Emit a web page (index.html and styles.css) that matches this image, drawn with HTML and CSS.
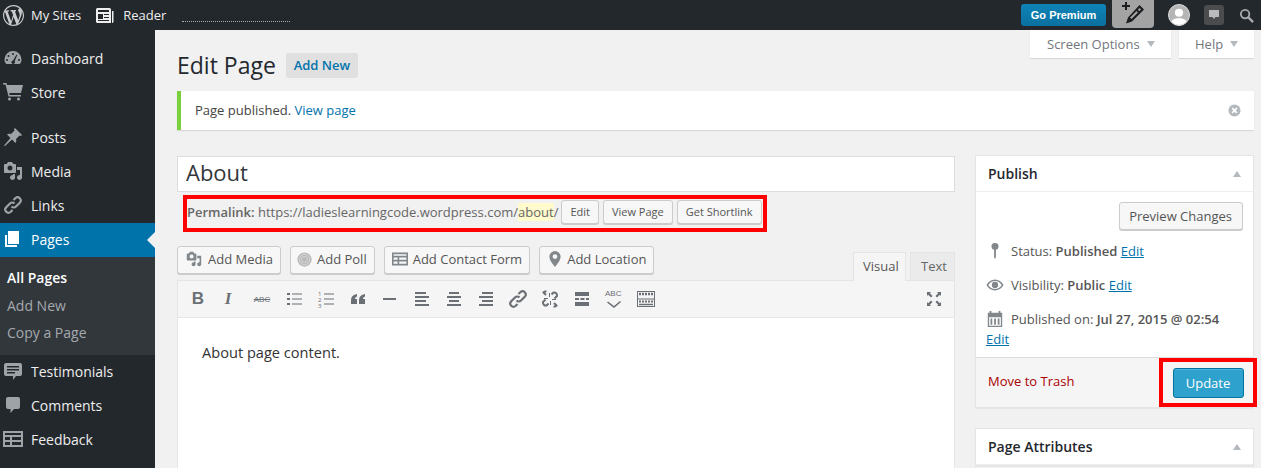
FILE: index.html
```html
<!DOCTYPE html>
<html lang="en">
<head>
    <meta charset="UTF-8">
    <title>Edit Page</title>
    <link rel="stylesheet" href="styles.css">
</head>
<body>
    <header class="topbar">
        <a class="top-link">
            <svg class="wp-logo" viewBox="0 0 20 20"><path d="M20 10c0-5.510-4.490-10-10-10C4.480 0 0 4.490 0 10c0 5.520 4.480 10 10 10 5.510 0 10-4.480 10-10zM7.780 15.370L4.370 6.220c.55-.02 1.170-.08 1.170-.08.5-.06.44-1.130-.06-1.110 0 0-1.450.11-2.370.11-.18 0-.37 0-.58-.01C4.120 2.690 6.870 1.110 10 1.110c2.330 0 4.450.87 6.050 2.340-.68-.11-1.650.39-1.650 1.580 0 .74.45 1.360.9 2.100.35.61.55 1.360.55 2.460 0 1.490-1.400 5-1.400 5l-3.030-8.370c.54-.02.82-.17.82-.17.5-.05.44-1.250-.06-1.220 0 0-1.440.12-2.380.12-.87 0-2.330-.12-2.330-.12-.5-.03-.56 1.200-.06 1.220l.92.08 1.260 3.410zM17.410 10c.24-.64.74-1.870.43-4.250.7 1.290 1.050 2.710 1.050 4.250 0 3.290-1.730 6.240-4.400 7.780.97-2.590 1.940-5.200 2.920-7.780zM6.100 18.090C3.120 16.650 1.110 13.530 1.110 10c0-1.300.23-2.480.72-3.590C3.250 10.300 4.670 14.200 6.100 18.090zm4.030-6.630l2.580 6.980c-.86.29-1.760.45-2.710.45-.79 0-1.570-.11-2.290-.33.81-2.380 1.620-4.740 2.420-7.100z"/></svg>
            My Sites
        </a>
        <a class="top-link reader">
            <svg class="reader-icon" viewBox="0 0 18 15"><path fill-rule="evenodd" d="M0 1.500A1.500 1.500 0 0 1 1.500 0h12A1.500 1.500 0 0 1 15 1.500V15H1.500A1.500 1.500 0 0 1 0 13.500zM2 2v2h11V2zM2 6v5h5V6zm6 0v1h5V6zm0 3v1h5V9zM2 12v1h11v-1zM16 3h1.500v10.500A1.500 1.500 0 0 1 16 15z"/></svg>
            Reader
        </a>
        <div class="top-dots"></div>
        <div class="top-right">
            <a class="go-premium">Go Premium</a>
            <a class="new-post">
                <svg viewBox="0 0 24 24" width="24" height="24"><path d="M4 0h2v3h3v2H6v3H4V5H1V3h3z" fill="#1b1e21"/><path fill-rule="evenodd" d="M18.500 3L23 7.500 11 19.500 5 21.500l2-6zM18.500 6L16.800 7.700l1.500 1.500L20 7.500zM15.500 9L9 15.500l1.500 1.500L17 10.500z" fill="#1b1e21"/></svg>
            </a>
            <span class="avatar">
                <svg viewBox="0 0 22 22"><circle cx="11" cy="8.500" r="4.500"/><path d="M2 22c0-6 4-7.500 9-7.500s9 1.500 9 7.500z"/></svg>
            </span>
            <span class="notes">
                <svg viewBox="0 0 12 12" width="12" height="12"><path d="M1 1h10v7H7.500L6 10 4.500 8H1z" fill="#b9bbbc"/></svg>
            </span>
            <svg class="search" viewBox="0 0 16 16"><circle cx="6.500" cy="6.500" r="4.500" fill="none" stroke="#a8aaac" stroke-width="2"/><path d="M10 10l5 5" stroke="#a8aaac" stroke-width="2.500"/></svg>
        </div>
    </header>

    <div class="layout">
        <nav class="sidebar">
            <a class="menu-item">
                <svg class="menu-icon" viewBox="0 0 20 20"><path fill-rule="evenodd" d="M10 3a8.500 8.500 0 0 0-8.500 8.500c0 2 .7 3.500 2 4.500h13c1.300-1 2-2.500 2-4.500A8.500 8.500 0 0 0 10 3zM10 5a1 1 0 1 1 0 2 1 1 0 0 1 0-2zM5.500 7a1 1 0 1 1 0 2 1 1 0 0 1 0-2zM4 11a1 1 0 1 1 0 2 1 1 0 0 1 0-2zM16 11a1 1 0 1 1 0 2 1 1 0 0 1 0-2zM13.500 6.500l.8.400-2.600 6.300a1.800 1.800 0 1 1-1.600-.8z"/></svg>
                Dashboard
            </a>
            <a class="menu-item">
                <svg class="menu-icon" viewBox="0 0 20 20"><path d="M0 1h3.500l.6 2H20l-2 8H6.200l.5 2H18v1.500H5.500L2.500 2.500H0zM6.500 15.500a1.500 1.500 0 1 1 0 3 1.500 1.500 0 0 1 0-3zM15.500 15.500a1.500 1.500 0 1 1 0 3 1.500 1.500 0 0 1 0-3z"/></svg>
                Store
            </a>
            <div class="menu-gap"></div>
            <a class="menu-item">
                <svg class="menu-icon" viewBox="0 0 20 20"><path d="M12 1l7 7-1 1-1.500-.5L13 12c.5 2 .3 3-.5 4L9 12.500 2 19l-1-.5L7.500 11 4 7.500c1-.8 2-1 4-.5l3.500-3.500L11 2z"/></svg>
                Posts
            </a>
            <a class="menu-item">
                <svg class="menu-icon" viewBox="0 0 20 20"><path fill-rule="evenodd" d="M13 11V4c0-.55-.45-1-1-1h-1.670L9 1H5L3.670 3H2c-.55 0-1 .45-1 1v7c0 .55.45 1 1 1h10c.55 0 1-.45 1-1zM7 4.500c1.380 0 2.500 1.120 2.500 2.500S8.380 9.500 7 9.500 4.500 8.380 4.500 7 5.620 4.500 7 4.500zM14 6h5v10.500c0 1.380-1.120 2.500-2.500 2.500S14 17.880 14 16.500s1.120-2.500 2.500-2.500c.17 0 .34.020.5.050V9h-3V6zm-4 8.050V13h2v3.500c0 1.380-1.120 2.500-2.500 2.500S7 17.880 7 16.500 8.120 14 9.500 14c.17 0 .34.020.5.050z"/></svg>
                Media
            </a>
            <a class="menu-item">
                <svg class="menu-icon" viewBox="0 0 20 20"><g fill="none" stroke="#9ea3a8" stroke-width="2.200"><path d="M8.500 11.500a3.200 3.200 0 0 0 4.500 0l4-4a3.200 3.200 0 0 0-4.500-4.500l-2 2"/><path d="M11.500 8.500a3.200 3.200 0 0 0-4.500 0l-4 4a3.200 3.200 0 0 0 4.500 4.500l2-2"/></g></svg>
                Links
            </a>
            <a class="menu-item menu-current">
                <svg class="menu-icon" viewBox="0 0 20 20"><path d="M5 2h11v13H5z"/><path d="M2 6h2v10h10v2H2z"/></svg>
                Pages
            </a>
            <div class="submenu">
                <a class="submenu-item submenu-current">All Pages</a>
                <a class="submenu-item">Add New</a>
                <a class="submenu-item">Copy a Page</a>
            </div>
            <a class="menu-item">
                <svg class="menu-icon" viewBox="0 0 20 20"><path fill-rule="evenodd" d="M3 2h14a2 2 0 0 1 2 2v9a2 2 0 0 1-2 2h-4l-3 4v-4H3a2 2 0 0 1-2-2V4a2 2 0 0 1 2-2zM4 5v1.500h12V5zM4 8v1.500h12V8zM4 11v1.500h8V11z"/></svg>
                Testimonials
            </a>
            <a class="menu-item">
                <svg class="menu-icon" viewBox="0 0 20 20"><path d="M5 2h10a2 2 0 0 1 2 2v8a2 2 0 0 1-2 2h-4l-3.500 4v-4H5a2 2 0 0 1-2-2V4a2 2 0 0 1 2-2z"/></svg>
                Comments
            </a>
            <a class="menu-item">
                <svg class="menu-icon" viewBox="0 0 20 20"><path fill-rule="evenodd" d="M0 2h20v16H0zM2 4v2h16V4zM2 8v3h5V8zM9 8v3h9V8zM2 13v3h5v-3zM9 13v3h9v-3z"/></svg>
                Feedback
            </a>
        </nav>

        <main class="content">
            <div class="screen-tabs">
                <a class="screen-tab tab-options">Screen Options <span class="caret"></span></a>
                <a class="screen-tab tab-help">Help <span class="caret"></span></a>
            </div>

            <div class="page-head">
                <h1>Edit Page</h1>
                <a class="add-new">Add New</a>
            </div>

            <div class="notice">
                <p>Page published. <a class="link-plain">View page</a></p>
                <svg class="notice-close" viewBox="0 0 14 14"><circle cx="7" cy="7" r="6.500" fill="#b4b9be"/><path d="M4.500 4.500l5 5M9.500 4.500l-5 5" stroke="#fff" stroke-width="1.800"/></svg>
            </div>

            <div class="columns">
                <div class="main-col">
                    <div class="title-input">About</div>

                    <div class="permalink">
                        <b>Permalink:</b>&nbsp;https://ladieslearningcode.wordpress.com/<span class="slug">about</span>/
                        <a class="btn-small">Edit</a>
                        <a class="btn-small">View Page</a>
                        <a class="btn-small">Get Shortlink</a>
                    </div>

                    <div class="media-row">
                        <div class="media-buttons">
                            <a class="btn">
                                <svg class="btn-icon icon-media" viewBox="0 0 20 20"><path fill-rule="evenodd" d="M13 11V4c0-.55-.45-1-1-1h-1.670L9 1H5L3.670 3H2c-.55 0-1 .45-1 1v7c0 .55.45 1 1 1h10c.55 0 1-.45 1-1zM7 4.500c1.380 0 2.500 1.120 2.500 2.500S8.380 9.500 7 9.500 4.500 8.380 4.500 7 5.620 4.500 7 4.500zM14 6h5v10.500c0 1.380-1.120 2.500-2.500 2.500S14 17.880 14 16.500s1.120-2.500 2.500-2.500c.17 0 .34.020.5.050V9h-3V6zm-4 8.050V13h2v3.500c0 1.380-1.120 2.500-2.500 2.500S7 17.880 7 16.500 8.120 14 9.500 14c.17 0 .34.020.5.050z"/></svg>
                                Add Media
                            </a>
                            <a class="btn">
                                <svg class="btn-icon icon-poll" viewBox="0 0 20 20"><circle cx="10" cy="10" r="9.500" fill="#b9b9b9"/><circle cx="10" cy="10" r="7" fill="none" stroke="#e2e2e2"/><circle cx="10" cy="10" r="4" fill="none" stroke="#e2e2e2"/></svg>
                                Add Poll
                            </a>
                            <a class="btn">
                                <svg class="btn-icon icon-form" viewBox="0 0 20 20"><path fill-rule="evenodd" d="M0 2h20v16H0zM2 4v2h16V4zM2 8v3h5V8zM9 8v3h9V8zM2 13v3h5v-3zM9 13v3h9v-3z"/></svg>
                                Add Contact Form
                            </a>
                            <a class="btn">
                                <svg class="btn-icon icon-pin" viewBox="0 0 14 20"><path fill-rule="evenodd" d="M7 0a7 7 0 0 1 7 7c0 4.500-4 9.500-7 13-3-3.500-7-8.500-7-13a7 7 0 0 1 7-7zM7 4a3 3 0 1 0 0 6 3 3 0 0 0 0-6z"/></svg>
                                Add Location
                            </a>
                        </div>
                        <div class="editor-tabs">
                            <a class="editor-tab editor-tab-on">Visual</a>
                            <a class="editor-tab">Text</a>
                        </div>
                    </div>

                    <div class="editor">
                        <div class="toolbar">
                            <span class="tool tool-b">B</span>
                            <span class="tool tool-i">I</span>
                            <span class="tool tool-abc">ABC</span>
                            <span class="tool"><svg viewBox="0 0 20 20"><path d="M3 4h3v2H3zM8 4.500h10V5.500H8zM3 9h3v2H3zM8 9.500h10v1H8zM3 14h3v2H3zM8 14.500h10v1H8z"/></svg></span>
                            <span class="tool tool-ol">
                                <svg viewBox="0 0 20 20"><path d="M8 4.500h10V5.500H8zM8 9.500h10v1H8zM8 14.500h10v1H8z"/></svg>
                                <span class="ol-nums">1<br>2<br>3</span>
                            </span>
                            <span class="tool"><svg viewBox="0 0 20 20"><path d="M9 5v2.500C7.500 8 7 9 7 10h2v5H3v-4c0-3.500 2-5.500 6-6zM17 5v2.500c-1.500.5-2 1.500-2 2.500h2v5h-6v-4c0-3.500 2-5.500 6-6z"/></svg></span>
                            <span class="tool"><svg viewBox="0 0 20 20"><path d="M3 9h13v2H3z"/></svg></span>
                            <span class="tool"><svg viewBox="0 0 20 20"><path d="M3 3h11v2H3zM3 7h14v2H3zM3 11h11v2H3zM3 15h14v2H3z"/></svg></span>
                            <span class="tool"><svg viewBox="0 0 20 20"><path d="M5 3h10v2H5zM3 7h14v2H3zM5 11h10v2H5zM3 15h14v2H3z"/></svg></span>
                            <span class="tool"><svg viewBox="0 0 20 20"><path d="M6 3h11v2H6zM3 7h14v2H3zM6 11h11v2H6zM3 15h14v2H3z"/></svg></span>
                            <span class="tool"><svg viewBox="0 0 20 20"><g fill="none" stroke="#6b7076" stroke-width="2.200"><path d="M8.500 11.500a3.200 3.200 0 0 0 4.500 0l4-4a3.200 3.200 0 0 0-4.500-4.500l-2 2"/><path d="M11.500 8.500a3.200 3.200 0 0 0-4.500 0l-4 4a3.200 3.200 0 0 0 4.500 4.500l2-2"/></g></svg></span>
                            <span class="tool"><svg viewBox="0 0 20 20"><g fill="none" stroke="#6b7076" stroke-width="2"><path d="M11.500 5.500l2-2a3 3 0 0 1 3.500 3.500l-2.500 2.500"/><path d="M8.500 14.500l-2 2A3 3 0 0 1 3 13l2.500-2.500"/><path d="M6 6L3.500 3.500A3 3 0 0 1 6.500 2.500M14 14l2.500 2.500a3 3 0 0 1-3 1"/></g><path d="M9 4h1v4H9zM10 12h1v4h-1zM4 9h4v1H4zM12 10h4v1h-4z"/></svg></span>
                            <span class="tool"><svg viewBox="0 0 20 20"><path d="M3 3h14v4H3zM3 9h4v2H3zM8.500 9h4v2h-4zM14 9h3v2h-3zM3 13h14v4H3z"/></svg></span>
                            <span class="tool tool-spell">
                                <span class="spell-text">ABC</span>
                                <svg class="spell-check" viewBox="0 0 16 10"><path d="M1 3.500l1-1L8 7l6-5 1 1L8 9z"/></svg>
                            </span>
                            <span class="tool"><svg viewBox="0 0 20 20"><path fill-rule="evenodd" d="M1 2h18v16H1zM2 3v6.500h16V3zM2 10.500V17h16v-6.500z"/><path d="M3 5h14" stroke="#6b7076" stroke-width="2.500" stroke-dasharray="2 1"/><path d="M3 12.500h14" stroke="#6b7076" stroke-width="2" stroke-dasharray="2 1"/><path d="M3 15.500h14" stroke="#6b7076" stroke-width="1.500"/></svg></span>
                            <span class="tool tool-full"><svg viewBox="0 0 20 20"><path d="M3 3h4L5.800 4.200 8.500 7 7 8.500 4.200 5.800 3 7zM17 3v4l-1.200-1.200L13 8.500 11.500 7l2.700-2.800L13 3zM3 17v-4l1.200 1.200L7 11.500 8.500 13l-2.700 2.800L7 17zM17 17h-4l1.200-1.200L11.500 13l1.500-1.500 2.800 2.700L17 13z"/></svg></span>
                        </div>
                        <div class="editor-body">
                            <p>About page content.</p>
                        </div>
                    </div>
                </div>

                <aside class="side-col">
                    <section class="box box-publish">
                        <div class="box-head">
                            <h2>Publish</h2>
                            <span class="caret caret-up"></span>
                        </div>
                        <div class="box-body">
                            <div class="preview-row"><a class="btn btn-plain">Preview Changes</a></div>
                            <div class="pub-row">
                                <svg class="pub-icon" viewBox="0 0 20 20"><path d="M10 1a3.800 3.800 0 0 1 1 7.500V17l-1 2-1-2V8.500A3.800 3.800 0 0 1 10 1z"/></svg>
                                <span>Status: <b>Published</b> <a class="link">Edit</a></span>
                            </div>
                            <div class="pub-row">
                                <svg class="pub-icon" viewBox="0 0 20 20"><path fill-rule="evenodd" d="M10 4c4 0 7.500 2.500 9.500 6-2 3.500-5.500 6-9.500 6S2.500 13.500.5 10C2.500 6.500 6 4 10 4zM10 5.500c-3 0-5.800 1.800-7.500 4.500 1.700 2.700 4.500 4.500 7.500 4.500s5.800-1.800 7.500-4.500C15.800 7.300 13 5.500 10 5.500zM10 6.500a3.500 3.500 0 1 1 0 7 3.500 3.500 0 0 1 0-7z"/></svg>
                                <span>Visibility: <b>Public</b> <a class="link">Edit</a></span>
                            </div>
                            <div class="pub-row">
                                <svg class="pub-icon" viewBox="0 0 20 20"><path fill-rule="evenodd" d="M2 3h2V1h2v2h8V1h2v2h2v16H2zM3.500 8v9.500h13V8zM5 9.500h2v7H5zM9 9.500h2v7H9zM13 9.500h2v7h-2z"/></svg>
                                <span>Published on: <b>Jul 27, 2015 @ 02:54</b></span>
                            </div>
                            <a class="link date-edit">Edit</a>
                        </div>
                        <div class="box-foot">
                            <a class="trash">Move to Trash</a>
                            <div class="update-mark"><a class="btn-update">Update</a></div>
                        </div>
                    </section>

                    <section class="box">
                        <div class="box-head">
                            <h2>Page Attributes</h2>
                            <span class="caret caret-up"></span>
                        </div>
                    </section>
                </aside>
            </div>
        </main>
    </div>
</body>
</html>
```

FILE: styles.css
```css
* {
    box-sizing: border-box;
}

html, body {
    height: 100%;
    margin: 0;
    overflow: hidden;
}

body {
    font-family: "Open Sans", sans-serif;
    font-size: 13px;
    color: #444;
    background: #f1f1f1;
    display: flex;
    flex-direction: column;
}

p, h1, h2 {
    margin: 0;
}

/* top bar */
.topbar {
    height: 30px;
    flex: none;
    background: #23282d;
    display: flex;
    align-items: center;
    color: #eee;
    font-size: 13px;
}

.top-link {
    display: flex;
    align-items: center;
}

.wp-logo {
    width: 21px;
    height: 21px;
    fill: #c8cacc;
    margin: 0 7px 0 3px;
}

.reader {
    margin-left: 15px;
}

.reader-icon {
    width: 18px;
    height: 15px;
    fill: #eee;
    margin-right: 9px;
}

.top-dots {
    width: 108px;
    margin: 12px 0 0 16px;
    border-top: 1px dotted #aaa;
}

.top-right {
    margin-left: auto;
    display: flex;
    align-items: center;
}

.go-premium {
    width: 85px;
    height: 22px;
    line-height: 22px;
    text-align: center;
    background: linear-gradient(#0f84b8, #0a709f);
    border-radius: 3px;
    font-family: "Liberation Sans", sans-serif;
    font-size: 11px;
    font-weight: bold;
    color: #fff;
}

.new-post {
    width: 42px;
    height: 28px;
    margin: 0 0 2px 6px;
    background: #a3a3a3;
    border-radius: 0 0 4px 4px;
    display: flex;
    align-items: center;
    justify-content: center;
}

.avatar {
    width: 22px;
    height: 22px;
    margin-left: 14px;
    border-radius: 50%;
    background: #b5b5b5;
    border: 1px solid #ddd;
    overflow: hidden;
}

.avatar svg {
    display: block;
    fill: #fff;
}

.notes {
    width: 20px;
    height: 20px;
    margin-left: 14px;
    background: #4a4c4e;
    border-radius: 3px;
    display: flex;
    align-items: center;
    justify-content: center;
}

.search {
    width: 15px;
    height: 15px;
    margin: 0 7px 0 15px;
}

/* sidebar */
.layout {
    flex: 1;
    display: flex;
    min-height: 0;
}

.sidebar {
    width: 155px;
    flex: none;
    background: #23282d;
    padding-top: 12px;
    color: #eee;
    font-size: 14px;
}

.menu-item {
    height: 34px;
    display: flex;
    align-items: center;
    padding: 0 0 2px 3px;
    position: relative;
}

.menu-icon {
    width: 20px;
    height: 20px;
    fill: #9ea3a8;
    margin-right: 8px;
}

.menu-gap {
    height: 11px;
}

.menu-current {
    background: #0073aa;
    color: #fff;
}

.menu-current .menu-icon {
    fill: #fff;
}

.menu-current::after {
    content: "";
    position: absolute;
    right: 0;
    top: 9px;
    border: 8px solid transparent;
    border-right-color: #f1f1f1;
    border-left-width: 0;
}

.submenu {
    height: 98px;
    background: #32373c;
    padding-top: 7px;
    color: #a5a9ad;
}

.submenu-item {
    display: block;
    height: 27.500px;
    line-height: 27px;
    padding-left: 7px;
}

.submenu-current {
    color: #fff;
    font-weight: 600;
}

/* content */
.content {
    flex: 1;
    min-width: 0;
    padding: 0 7px 0 22px;
}

.screen-tabs {
    height: 28px;
    margin-bottom: -19px;
    display: flex;
    justify-content: flex-end;
    gap: 8px;
}

.screen-tab {
    height: 28px;
    background: #fff;
    box-shadow: 0 1px 1px rgba(0, 0, 0, .1);
    color: #72777c;
    display: flex;
    align-items: center;
    gap: 7px;
    padding: 0 8px 0 17px;
}

.tab-options {
    width: 141px;
}

.tab-help {
    width: 75px;
    padding-left: 16px;
}

.caret {
    width: 0;
    height: 0;
    border: 4.500px solid transparent;
    border-top: 6px solid #b4b9be;
    border-bottom: 0;
}

.caret-up {
    border-top: 0;
    border-bottom: 6px solid #b4b9be;
}

.page-head {
    display: flex;
    align-items: center;
    gap: 10px;
    height: 52px;
}

h1 {
    font-size: 23px;
    font-weight: 400;
    color: #23282d;
}

.add-new {
    width: 72px;
    height: 25px;
    line-height: 25px;
    text-align: center;
    background: #e0e0e0;
    border-radius: 2px;
    color: #0073aa;
    font-weight: 600;
}

.notice {
    height: 39px;
    background: #fff;
    border-left: 4px solid #7ad03a;
    box-shadow: 0 1px 1px rgba(0, 0, 0, .1);
    display: flex;
    align-items: center;
    justify-content: space-between;
    padding: 0 13px 2px 14px;
}

.notice-close {
    width: 13px;
    height: 13px;
    margin-top: 2px;
}

.link-plain {
    color: #0073aa;
}

.columns {
    display: flex;
    gap: 20px;
    margin-top: 25px;
}

.main-col {
    flex: 1;
    min-width: 0;
}

.side-col {
    width: 279px;
    flex: none;
}

.title-input {
    height: 36px;
    margin-top: 1px;
    padding-left: 8px;
    line-height: 31px;
    background: #fff;
    border: 1px solid #ddd;
    font-size: 22px;
    color: #32373c;
}

.permalink {
    width: 584px;
    height: 37px;
    margin: 3px 0 0 6px;
    border: 4px solid #f00;
    display: flex;
    align-items: center;
    padding-bottom: 4px;
    white-space: nowrap;
    color: #666;
    overflow: hidden;
}

.permalink b {
    font-weight: 600;
}

.slug {
    background: #fffbcc;
}

.btn-small {
    height: 24px;
    line-height: 22px;
    margin-left: 4px;
    padding: 0 8px;
    border: 1px solid #ccc;
    border-radius: 3px;
    background: #f7f7f7;
    box-shadow: 0 1px 0 #ccc;
    color: #555;
    font-size: 11px;
}

.slug + .btn-small {
    margin-left: 3px;
}

.media-row {
    display: flex;
    justify-content: space-between;
    align-items: flex-end;
    height: 48px;
}

.media-buttons {
    display: flex;
    gap: 9px;
    align-self: flex-start;
    margin-top: 14px;
}

.btn {
    height: 28px;
    display: flex;
    align-items: center;
    padding: 0 7px 2px 8px;
    border: 1px solid #ccc;
    border-radius: 3px;
    background: #f7f7f7;
    box-shadow: 0 1px 0 #ccc;
    color: #555;
}

.btn-plain {
    padding: 0 10px 1px 9px;
}

.btn-icon {
    width: 16px;
    height: 16px;
    margin-right: 6px;
    fill: #82878c;
}

.icon-poll {
    width: 15px;
    height: 15px;
    margin-left: -2px;
    margin-right: 5px;
}

.icon-form {
    margin-right: 5px;
    margin-left: -1px;
}

.icon-pin {
    width: 14px;
    margin-right: 5px;
}

.editor-tabs {
    display: flex;
    gap: 4px;
}

.editor-tab {
    width: 45px;
    height: 28px;
    padding: 0 0 0 10px;
    line-height: 26px;
    background: #ebebeb;
    border: 1px solid #e4e4e4;
    border-bottom: 0;
    color: #666;
}

.editor-tab-on {
    background: #f5f5f5;
    color: #555;
    height: 29px;
    margin-bottom: -1px;
    position: relative;
    width: 53px;
    padding: 0 0 0 9px;
}

.editor {
    background: #fff;
    border: 1px solid #e5e5e5;
    height: 200px;
}

.toolbar {
    height: 37px;
    background: #f5f5f5;
    border-bottom: 1px solid #e5e5e5;
    display: flex;
    align-items: center;
    padding-left: 4px;
}

.tool {
    width: 20px;
    height: 20px;
    margin: 0 6px;
    flex: none;
    display: flex;
    align-items: center;
    justify-content: center;
    color: #6b7076;
    position: relative;
}

.tool svg {
    width: 20px;
    height: 20px;
    fill: #6b7076;
}

.tool-b, .tool-i {
    font-family: "Liberation Sans", sans-serif;
    font-size: 17px;
    font-weight: bold;
}

.tool-i {
    font-style: italic;
    font-family: "Liberation Serif", serif;
    left: -2px;
}

.tool-abc {
    font-family: "Liberation Sans", sans-serif;
    font-size: 8px;
    text-decoration: line-through;
}

.ol-nums {
    position: absolute;
    left: 2px;
    top: 2px;
    font-size: 6px;
    line-height: 6px;
}

.spell-text {
    position: absolute;
    top: 0;
    left: 1px;
    font-family: "Liberation Sans", sans-serif;
    font-size: 8px;
    line-height: 9px;
}

.tool svg.spell-check {
    position: absolute;
    top: 10px;
    left: 2px;
    width: 16px;
    height: 10px;
}

.tool-full {
    margin-left: auto;
    margin-right: 10px;
}

.editor-body {
    padding: 25px 24px;
    color: #333;
    font-size: 14.600px;
    line-height: 18px;
}

/* publish box */
.box {
    background: #fff;
    border: 1px solid #e5e5e5;
    box-shadow: 0 1px 1px rgba(0, 0, 0, .04);
}

.box-publish {
    margin-bottom: 20px;
}

.box-head {
    height: 36px;
    display: flex;
    align-items: center;
    justify-content: space-between;
    padding: 0 12px;
    border-bottom: 1px solid #eee;
}

h2 {
    font-size: 14px;
    font-weight: 600;
    color: #23282d;
}

.box-body {
    padding: 10px 10px 8px;
    height: 165px;
}

.preview-row {
    display: flex;
    justify-content: flex-end;
    margin-bottom: 4px;
}

.pub-row {
    height: 34px;
    display: flex;
    align-items: center;
    gap: 7px;
    color: #555;
}

.pub-row b {
    font-weight: 600;
}

.pub-icon {
    width: 18px;
    height: 18px;
    fill: #82878c;
}

.link {
    color: #0073aa;
    text-decoration: underline;
}

.date-edit {
    display: block;
    margin-top: -6px;
}

.box-foot {
    height: 50px;
    background: #f5f5f5;
    border-top: 1px solid #ddd;
    display: flex;
    align-items: center;
    justify-content: space-between;
    padding-left: 12px;
}

.trash {
    color: #a00;
    margin-bottom: 4px;
}

.update-mark {
    width: 98px;
    height: 49px;
    border: 4px solid #f00;
    margin-right: -4px;
    display: flex;
    align-items: center;
    justify-content: center;
}

.btn-update {
    width: 71px;
    height: 30px;
    line-height: 28px;
    text-align: center;
    color: #fff;
    background: #2ea2cc;
    border: 1px solid #0074a2;
    border-radius: 3px;
    box-shadow: inset 0 1px 0 rgba(120, 200, 230, .5);
}
```
